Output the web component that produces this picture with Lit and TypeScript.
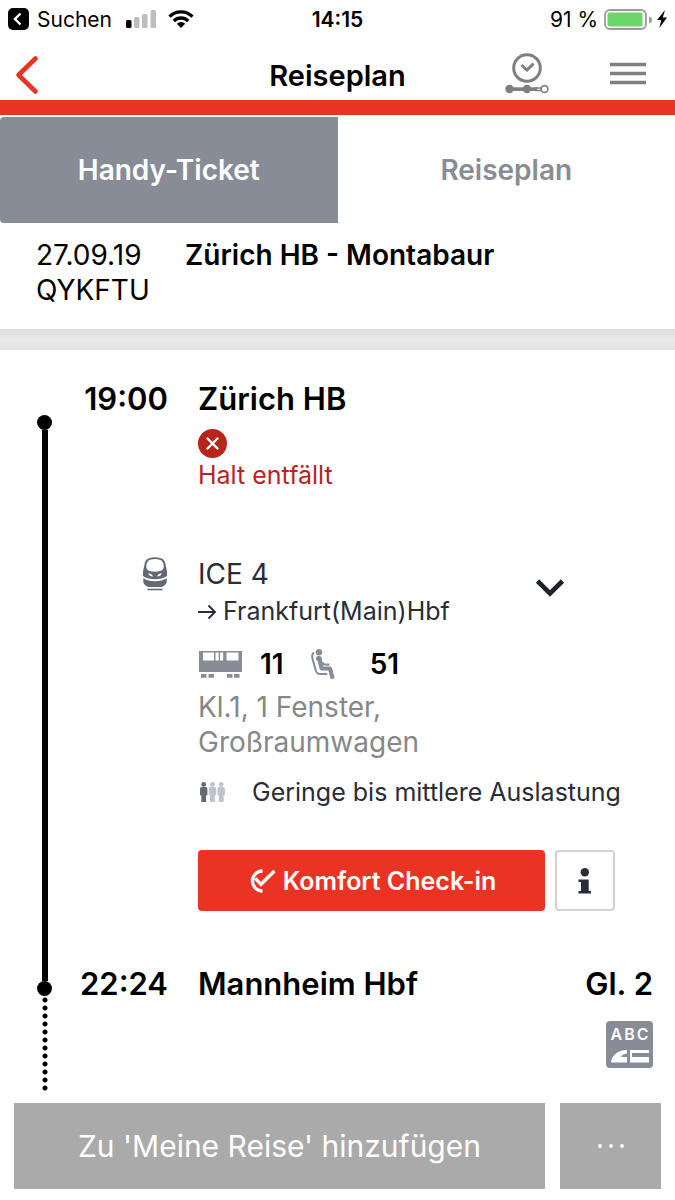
import { LitElement, html, svg, css } from "lit";
import { customElement, property, state } from "lit/decorators.js";
import { classMap } from "lit/directives/class-map.js";

const seatLines = ["Kl.1, 1 Fenster,", "Großraumwagen"];

@customElement("status-bar")
class StatusBar extends LitElement {
  static styles = css`
    :host { display: flex; align-items: center; height: 38px; padding: 0 8px; font-size: 21px; }
    .side { flex: 1; display: flex; align-items: center; }
    .end { justify-content: flex-end; }
    .back { display: flex; align-items: center; gap: 8px; color: inherit; text-decoration: none; }
    .signal { margin: 0 12px 0 14px; }
    .clock { font-weight: 600; }
    .battery { margin: 0 5px 0 6px; }
    svg { display: block; }
  `;
  render() {
    return html`
      <div class="side">
        <a class="back" href="#suchen">
          <svg width="21" height="22" viewBox="0 0 21 22" aria-hidden="true">
            <rect width="21" height="22" rx="5" fill="#000" />
            <path d="M12.500 5.500 7 11l5.500 5.500" fill="none" stroke="#fff" stroke-width="2.400" />
          </svg>
          <span>Suchen</span>
        </a>
        <svg class="signal" width="30" height="18" viewBox="0 0 30 18" aria-hidden="true">
          <rect x="0" y="10" width="5.500" height="8" rx="1.500" />
          <rect x="8" y="7" width="5.500" height="11" rx="1.500" fill="#bdbdbd" />
          <rect x="16" y="4" width="5.500" height="14" rx="1.500" fill="#bdbdbd" />
          <rect x="24.500" y="0" width="5.500" height="18" rx="1.500" fill="#bdbdbd" />
        </svg>
        <svg width="26" height="18" viewBox="0 0 26 18" aria-hidden="true">
          <g fill="none" stroke="#000" stroke-width="3.300">
            <path d="M1.500 6.700a16.300 16.300 0 0 1 23 0" />
            <path d="M5.800 11a10.200 10.200 0 0 1 14.400 0" />
          </g>
          <path d="M13 18 8.800 13.700a6 6 0 0 1 8.400 0z" />
        </svg>
      </div>
      <div class="clock">14:15</div>
      <div class="side end">
        <span>91 %</span>
        <svg class="battery" width="48" height="21" viewBox="0 0 48 21" aria-hidden="true">
          <rect x="1" y="1" width="41" height="19" rx="5" fill="#fff" stroke="#9b9b9b" stroke-width="1.800" />
          <rect x="3.500" y="3.500" width="35" height="14" rx="2" fill="#6cd66c" />
          <path d="M45 7.500q3 1 3 3.500t-3 3.500z" fill="#9b9b9b" />
        </svg>
        <svg width="10" height="18" viewBox="0 0 10 18" aria-hidden="true">
          <path d="M8 0 0 10h4.300L2.300 18 10 7.500H5.800z" />
        </svg>
      </div>
    `;
  }
}

@customElement("app-header")
class AppHeader extends LitElement {
  static styles = css`
    :host { display: grid; grid-template-columns: 1fr auto 1fr; align-items: center; height: 62px; padding: 0 29px 0 14px; border-bottom: 15px solid #ea3323; }
    h1 { margin: 14px 0 0; padding-left: 15px; font-size: 29px; line-height: 36px; font-weight: 600; }
    a, button { display: block; padding: 0; border: 0; background: none; }
    .back { justify-self: start; margin-top: 12px; }
    .actions { display: flex; align-items: center; justify-content: flex-end; gap: 61px; margin-top: 8px; }
    svg { display: block; }
  `;
  render() {
    return html`
      <a class="back" href="#zurueck" aria-label="Zurück">
        <svg width="26" height="40" viewBox="0 0 26 40">
          <path d="M21.500 3.500 4.500 20l17 16.500" fill="none" stroke="#ea3323" stroke-width="4.600" stroke-linecap="round" stroke-linejoin="round" />
        </svg>
      </a>
      <h1>Reiseplan</h1>
      <div class="actions">
        <button aria-label="Fahrtverlauf">
          <svg width="44" height="42" viewBox="0 0 44 42">
            <g fill="none" stroke="#7f7f7f">
              <circle cx="22" cy="16" r="13.300" stroke-width="3" />
              <path d="m16.500 13 5.500 5 6.500-6.300" stroke-width="3" />
              <path d="M30 36h6M30 38.500h6" stroke-width="1.300" />
              <circle cx="39.500" cy="37" r="3.400" stroke-width="1.600" />
            </g>
            <path d="M4 35.300h28v3.700H4z" fill="#7f7f7f" />
            <circle cx="4.500" cy="37" r="4.200" fill="#7f7f7f" />
            <circle cx="22" cy="37" r="4.200" fill="#7f7f7f" />
          </svg>
        </button>
        <button aria-label="Menü">
          <svg width="36" height="42" viewBox="0 0 36 42">
            <path d="M0 12.500h36M0 21.500h36M0 30.500h36" stroke="#7f7f7f" stroke-width="3.600" />
          </svg>
        </button>
      </div>
    `;
  }
}

@customElement("journey-plan")
class JourneyPlan extends LitElement {
  static styles = css`
    :host { flex: 1; display: grid; grid-template-columns: 15px 1fr; column-gap: 18px; padding: 0 22px 0 37px; }
    svg { display: block; }
    .rail { display: flex; flex-direction: column; align-items: center; padding-top: 65px; }
    .dot { width: 15px; height: 15px; border-radius: 50%; background: #000; }
    .line { flex: 1; width: 6px; background: #000; }
    .dots { width: 6px; height: 96px; background: radial-gradient(circle at 3px 4px, #000 2px, transparent 3px) 0 0 / 6px 8px; }
    .rows { display: grid; grid-template-columns: 98px 1fr; column-gap: 30px; align-content: start; padding-top: 29px; }
    .time { text-align: right; }
    .time, .name, .track { font-size: 31px; line-height: 40px; font-weight: 600; margin: 0; }
    .stop { display: flex; justify-content: space-between; }
    .cancelled { margin: 10px 0 65px; color: #b8241c; font-size: 25px; line-height: 32px; }
    .cancelled svg { margin-bottom: 1px; }
    .cancelled p { margin: 0; }
    .product { justify-self: end; margin-top: 1px; }
    .leg { color: #282d37; }
    .train { display: flex; justify-content: space-between; align-items: flex-start; padding-right: 88px; }
    .train p { margin: 0; font-size: 28px; line-height: 37px; }
    .train .target { display: flex; align-items: center; gap: 6px; font-size: 25px; }
    .toggle { margin-top: 22px; padding: 0; border: 0; background: none; }
    .seat { display: flex; align-items: center; height: 36px; margin-top: 16px; font-size: 28px; font-weight: 600; color: #000; }
    .seat .wagon { margin-right: 18px; }
    .seat .person { margin: 0 35px 0 27px; }
    .detail { margin: 8px 0 0; font-size: 28px; line-height: 35px; color: #878787; }
    .load { display: flex; align-items: center; gap: 27px; margin-top: 15px; font-size: 25px; line-height: 34px; white-space: nowrap; }
    .buttons { display: flex; gap: 10px; margin: 41px 38px 53px 0; }
    .buttons button { height: 61px; border-radius: 4px; font: inherit; }
    .checkin { flex: 1; display: flex; align-items: center; justify-content: center; gap: 7px; border: 0; background: #ea3323; color: #fff; }
    .checkin span { font-size: 25px; font-weight: 600; }
    .info { display: flex; align-items: center; justify-content: center; width: 60px; padding: 0; border: 2px solid #d0d2d5; background: #fff; }
    .order { grid-column: 2; justify-self: end; margin-top: 17px; width: 47px; height: 47px; border-radius: 4px; background: #878c96; color: #fff; display: flex; flex-direction: column; align-items: center; gap: 6px; }
    .letters { display: flex; gap: 2px; margin-top: 3px; font-size: 16px; line-height: 20px; font-weight: 600; }
  `;
  @state() open = false;

  person(x: number, color: string) {
    return svg`<g transform="translate(${x} 0)" fill=${color}><circle cx="3.700" cy="2.400" r="2.400" /><path d="M1.500 5h4.400q1.500 0 1.500 2v6.200H6.100V20H1.300v-6.800H0V7q0-2 1.500-2z" /></g>`;
  }

  render() {
    return html`
      <div class="rail" aria-hidden="true">
        <div class="dot"></div>
        <div class="line"></div>
        <div class="dot"></div>
        <div class="dots"></div>
      </div>
      <div class="rows">
        <div class="time">19:00</div>
        <div>
          <h2 class="name">Zürich HB</h2>
          <div class="cancelled">
            <svg width="29" height="29" viewBox="0 0 29 29" aria-hidden="true">
              <circle cx="14.500" cy="14.500" r="14.500" fill="#b8241c" />
              <path d="m9.500 9.500 10 10m0-10-10 10" stroke="#fff" stroke-width="2.400" stroke-linecap="round" />
            </svg>
            <p>Halt entfällt</p>
          </div>
        </div>

        <svg class="product" width="26" height="34" viewBox="-1 0 26 34" aria-hidden="true">
          <path fill="#646973" fill-rule="evenodd" d="M6 1.200Q12-.8 18 1.200 21.500 2.400 22.200 6L24 14.500V19Q19 22.300 12 22.300T0 19V14.500L1.800 6Q2.500 2.400 6 1.200zM7 2.800Q12 1.400 17 2.800 20 3.700 20.700 8.500 21 12.500 18 13.800 12 15.600 6 13.800 3 12.500 3.300 8.500 4 3.700 7 2.800zM5.300 16.200Q8.800 16.400 9.800 19.400 6.200 19.400 5.300 16.200zM18.700 16.200Q15.200 16.400 14.200 19.400 17.800 19.400 18.700 16.200z" />
          <path d="M.3 21.200Q5 24.200 12 24.200t11.700-3V25.500Q22.500 29 19 30H5Q1.500 29 .3 25.500z" fill="#646973" />
          <path d="M4.500 32.500h15" stroke="#646973" stroke-width="1.600" />
        </svg>
        <div class="leg">
          <div class="train">
            <div>
              <p>ICE 4</p>
              <p class="target">
                <svg width="19" height="16" viewBox="0 0 19 16" aria-hidden="true">
                  <path d="M0 8h17M10.500 1.500 17 8l-6.500 6.500" fill="none" stroke="#282d37" stroke-width="1.900" />
                </svg>
                Frankfurt(Main)Hbf
              </p>
            </div>
            <button class="toggle" aria-label="Zwischenhalte" aria-expanded=${this.open} @click=${() => (this.open = !this.open)}>
              <svg width="30" height="20" viewBox="0 0 30 20">
                <path d="m2.500 3 12.500 12.500L27.500 3" fill="none" stroke="#1e222b" stroke-width="4.600" />
              </svg>
            </button>
          </div>
          <div class="seat">
            <svg class="wagon" width="44" height="27" viewBox="0 0 44 27" aria-hidden="true">
              <path fill="#878c96" fill-rule="evenodd" d="M1 0h43v21H1zM5 1.500v8h11v-8zM17.500 1.500v8h3.200v-8zM22 1.500v8h3.200v-8zM28.500 1.500v8H40.500v-8zM3 23h5.500v3.700H3zM10.500 23h5.500v3.700h-5.500zM29 23h5.500v3.700H29zM36 23h5.500v3.700H36z" />
            </svg>
            <span>11</span>
            <svg class="person" width="24" height="31" viewBox="0 0 24 31" aria-hidden="true">
              <circle cx="8" cy="3.300" r="3.200" fill="#878c96" />
              <g fill="none" stroke="#878c96" stroke-linejoin="round">
                <path d="m8.300 10 2.400 9.500h8.300l2.700 10.300" stroke-width="4.200" />
                <path d="M7.500 9.500h.8" stroke-width="5" stroke-linecap="round" />
                <path d="m10 12.500 3 3 4.500.2" stroke-width="2.200" stroke-linecap="round" />
                <path d="M2.300 4Q.6 6 1.600 10l3 11q1 4 4.400 4h6.500" stroke-width="2" stroke-linecap="round" />
              </g>
            </svg>
            <span>51</span>
          </div>
          <p class="detail">${seatLines[0]}<br />${seatLines[1]}</p>
          <div class="load">
            <svg width="27" height="20" viewBox="0 0 27 20" aria-hidden="true">
              ${this.person(2, "#646973")}${this.person(10.800, "#bfc3cf")}${this.person(19.500, "#bfc3cf")}
            </svg>
            <span>Geringe bis mittlere Auslastung</span>
          </div>
          <div class="buttons">
            <button class="checkin">
              <svg width="29" height="24" viewBox="0 0 29 24" aria-hidden="true">
                <g fill="none" stroke="#fff">
                  <path d="M15.500 2A10 10 0 1 0 15.500 22" stroke-width="3.300" />
                  <path d="m8.300 9.300 5.700 6L27.500 2" stroke-width="3.300" />
                </g>
              </svg>
              <span>Komfort Check-in</span>
            </button>
            <button class="info" aria-label="Information">
              <svg width="14" height="26" viewBox="0 0 14 26">
                <circle cx="6.800" cy="4.200" r="4.200" fill="#282d37" />
                <path d="M.5 11.500h10.200V23H13v2.500H.5V23H3v-9H.5z" fill="#282d37" />
              </svg>
            </button>
          </div>
        </div>

        <div class="time">22:24</div>
        <div class="stop">
          <h2 class="name">Mannheim Hbf</h2>
          <span class="track">Gl. 2</span>
        </div>
        <div class="order">
          <div class="letters"><span>A</span><span>B</span><span>C</span></div>
          <svg width="38" height="13" viewBox="0 0 38 13" aria-hidden="true">
            <path fill="#fff" fill-rule="evenodd" d="M16 0v3.500q-5 .5-6 3.500H16v5.500H0Q0 8 4 4.500 8 0 16 0zM19 0h19v3H21v4h17v5.500H19z" />
          </svg>
        </div>
      </div>
    `;
  }
}

@customElement("app-root")
class AppRoot extends LitElement {
  static styles = css`
    :host { display: flex; flex-direction: column; min-height: 100vh; box-sizing: border-box; background: #fff; color: #000; font-family: Inter, "Liberation Sans", sans-serif; }
    .tabs { display: flex; padding-top: 2px; }
    .tab { flex: 1; height: 106px; padding: 0; border: 0; background: #fff; color: #878c96; font: inherit; font-size: 28px; font-weight: 600; }
    .active { background: #878c96; color: #fff; border-radius: 4px 0 0 4px; }
    .summary { display: grid; grid-template-columns: 119px 1fr; column-gap: 30px; padding: 15px 36px 21px; font-size: 28px; line-height: 35px; }
    .summary p { margin: 0; }
    .route { margin: 0; font: inherit; font-weight: 600; }
    .band { height: 21px; background: linear-gradient(#dedede, #e9e9e9 50%, #e2e2e2); }
    .footer { display: flex; gap: 15px; padding: 11px 14px; }
    .footer button { height: 86px; padding: 0; border: 0; background: #aaa; color: #fff; font: inherit; font-size: 30px; }
    .footer .add { flex: 1; }
    .footer .more { width: 101px; }
    .more svg { display: block; margin: 0 auto; }
  `;
  @property() active = "Handy-Ticket";

  render() {
    return html`
      <status-bar></status-bar>
      <app-header></app-header>
      <div class="tabs">
        ${["Handy-Ticket", "Reiseplan"].map(
          (t) => html`<button class=${classMap({ tab: true, active: t === this.active })} @click=${() => (this.active = t)}>${t}</button>`
        )}
      </div>
      <section class="summary">
        <div><p>27.09.19</p><p>QYKFTU</p></div>
        <h2 class="route">Zürich HB - Montabaur</h2>
      </section>
      <div class="band"></div>
      <journey-plan></journey-plan>
      <div class="footer">
        <button class="add">Zu 'Meine Reise' hinzufügen</button>
        <button class="more" aria-label="Mehr">
          <svg width="26" height="4" viewBox="0 0 26 4"><circle cx="2" cy="2" r="1.900" fill="#fff" /><circle cx="13" cy="2" r="1.900" fill="#fff" /><circle cx="24" cy="2" r="1.900" fill="#fff" /></svg>
        </button>
      </div>
    `;
  }
}
